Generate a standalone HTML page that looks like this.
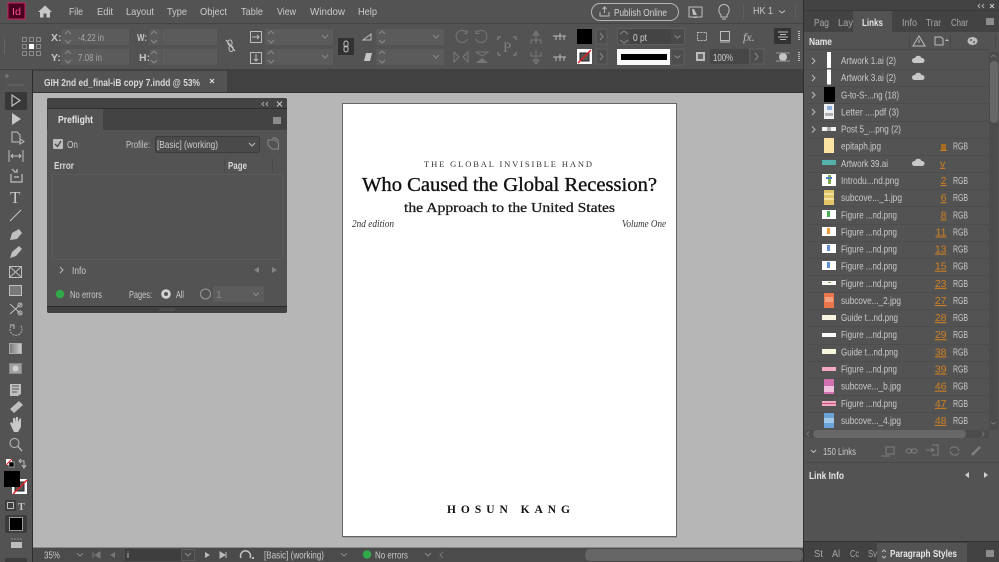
<!DOCTYPE html>
<html><head><meta charset="utf-8"><style>
html,body{margin:0;padding:0;background:#535353;width:999px;height:562px;overflow:hidden}
svg{display:block;position:absolute;left:0;top:0;filter:blur(.3px)}
text{font-family:"Liberation Sans",sans-serif;font-size:10.5px;fill:#cacaca;white-space:pre}
.b{font-weight:bold;fill:#e6e6e6}
.s{font-family:"Liberation Serif",serif;fill:#111}
.o{fill:#d0801f;text-decoration:underline}
.i{fill:none;stroke:#bdbdbd;stroke-width:1}
.d{fill:none;stroke:#8a8a8a;stroke-width:1}
.f{fill:#5b5b5b}
.g{fill:#bdbdbd}
</style></head><body>
<svg width="999" height="562" viewBox="0 0 999 562" xmlns="http://www.w3.org/2000/svg">
<rect width="999" height="562" fill="#535353"/>
<!-- menu bar -->
<rect x="0" y="23" width="803" height="1" fill="#444"/>
<rect x="8" y="3" width="17" height="16" fill="#49021f" stroke="#d11f65" stroke-width="1"/>
<text x="12" y="15" style="font-size:10px;fill:#ff4f8f" textLength="9" lengthAdjust="spacingAndGlyphs">Id</text>
<path d="M45 5.500L38 12H40V17.500H43.500V13.500H46.500V17.500H50V12H52Z" fill="#c8c8c8"/>
<text x="69" y="15" textLength="14" lengthAdjust="spacingAndGlyphs">File</text>
<text x="97" y="15" textLength="16" lengthAdjust="spacingAndGlyphs">Edit</text>
<text x="126" y="15" textLength="28" lengthAdjust="spacingAndGlyphs">Layout</text>
<text x="167" y="15" textLength="20" lengthAdjust="spacingAndGlyphs">Type</text>
<text x="200" y="15" textLength="27" lengthAdjust="spacingAndGlyphs">Object</text>
<text x="241" y="15" textLength="22" lengthAdjust="spacingAndGlyphs">Table</text>
<text x="277" y="15" textLength="19" lengthAdjust="spacingAndGlyphs">View</text>
<text x="310" y="15" textLength="35" lengthAdjust="spacingAndGlyphs">Window</text>
<text x="358" y="15" textLength="19" lengthAdjust="spacingAndGlyphs">Help</text>
<rect x="591.500" y="3.500" width="87" height="17" rx="8.500" fill="none" stroke="#b5b5b5"/>
<path d="M600 12V16H609V12M604.500 13V7M602.500 9L604.500 7L606.500 9" class="i"/>
<text x="614" y="16" style="fill:#d4d4d4" textLength="53" lengthAdjust="spacingAndGlyphs">Publish Online</text>
<rect x="689" y="7" width="13" height="10" class="i"/><path d="M692 9h2l3 6h-4z" fill="#bdbdbd"/><rect x="694" y="17" width="3" height="1" fill="#bdbdbd"/>
<path d="M721 15C717 11 719 4.500 724 4.500S731 11 727 15V17H721ZM722 19H726" class="i"/>
<rect x="743" y="4" width="1" height="15" fill="#5e5e5e"/>
<text x="753" y="14" style="fill:#c8c8c8" textLength="20" lengthAdjust="spacingAndGlyphs">HK 1</text>
<path d="M779 10.500L782 13L785 10.500" class="i"/>
<rect x="795" y="4" width="1" height="15" fill="#5e5e5e"/>
<!-- control bar -->
<rect x="0" y="69" width="803" height="1" fill="#404040"/>
<rect x="4" y="39" width="1" height="15" fill="#666"/>
<g class="d" fill="none"><rect x="22.500" y="37.500" width="4" height="4" class="d"/><rect x="29.500" y="37.500" width="4" height="4" class="d"/><rect x="36.500" y="37.500" width="4" height="4" class="d"/><rect x="22.500" y="44.500" width="4" height="4" class="d"/><rect x="36.500" y="44.500" width="4" height="4" class="d"/><rect x="22.500" y="51.500" width="4" height="4" class="d"/><rect x="29.500" y="51.500" width="4" height="4" class="d"/><rect x="36.500" y="51.500" width="4" height="4" class="d"/></g>
<rect x="29" y="44" width="5" height="5" fill="#fff"/>
<text x="51" y="41" class="b" style="fill:#c4c4c4" >X:</text>
<text x="51" y="61" class="b" style="fill:#c4c4c4">Y:</text>
<rect x="61" y="29" width="68" height="16" class="f"/><rect x="61" y="49" width="68" height="16" class="f"/>
<path d="M65 34L68 31L71 34M65 40L68 43L71 40M65 54L68 51L71 54M65 60L68 63L71 60" class="d"/>
<text x="78" y="41" style="fill:#a8a8a8" textLength="26" lengthAdjust="spacingAndGlyphs">-4.22 in</text>
<text x="78" y="61" style="fill:#a8a8a8" textLength="24" lengthAdjust="spacingAndGlyphs">7.08 in</text>
<text x="137" y="41" class="b" style="fill:#c4c4c4" textLength="10" lengthAdjust="spacingAndGlyphs">W:</text>
<text x="139" y="61" class="b" style="fill:#c4c4c4">H:</text>
<rect x="149" y="29" width="68" height="16" class="f"/><rect x="149" y="49" width="68" height="16" class="f"/>
<path d="M151 34L154 31L157 34M151 40L154 43L157 40M151 54L154 51L157 54M151 60L154 63L157 60" class="d"/>
<rect x="161" y="29" width="1" height="36" fill="#535353"/>
<path d="M226 40L235 51" stroke="#c4c4c4" fill="none" stroke-width="1.200"/>
<rect x="228" y="40" width="4" height="5.500" rx="2" transform="rotate(-8 230 43)" fill="none" stroke="#c4c4c4"/>
<rect x="229" y="46" width="4" height="5.500" rx="2" transform="rotate(-8 231 48)" fill="none" stroke="#c4c4c4"/>
<rect x="250.500" y="31.500" width="11" height="11" class="i"/><path d="M252 37H259M257 35L259 37L257 39" class="i"/>
<rect x="250.500" y="52.500" width="11" height="11" class="i"/><path d="M256 54V61M254 59L256 61L258 59" class="i"/>
<rect x="265" y="29" width="68" height="16" class="f"/><rect x="265" y="49" width="68" height="16" class="f"/>
<path d="M268 34L271 31L274 34M268 40L271 43L274 40M268 54L271 51L274 54M268 60L271 63L274 60M322 35L325 38L328 35M322 55L325 58L328 55" class="d"/>
<rect x="338" y="38" width="16" height="17" fill="#313131"/>
<rect x="344" y="41" width="4" height="6" rx="2" class="i"/><rect x="344" y="46" width="4" height="6" rx="2" class="i"/>
<path d="M363 40L371 34V40Z" class="i"/><path d="M364 61L366 53H372L370 61Z" fill="#c4c4c4"/>
<rect x="376" y="29" width="68" height="16" class="f"/><rect x="376" y="49" width="68" height="16" class="f"/>
<path d="M379 34L382 31L385 34M379 40L382 43L385 40M379 54L382 51L385 54M379 60L382 63L385 60M433 35L436 38L439 35M433 55L436 58L439 55" class="d"/>
<path d="M467 33A6 6 0 1 0 467.500 39M467 30V33.500H463.500M476 33A6 6 0 1 1 475.500 39M476 30V33.500H479.500" stroke="#777" fill="none"/>
<path d="M454 52V62L459 57ZM468 52V62L463 57Z" stroke="#7a7a7a" fill="none"/><path d="M476 63H488L482 58Z" fill="#777"/><path d="M476 52H488L482 56Z" fill="#535353" stroke="#777"/>
<path d="M498 40V37H501M513 37H516V40M498 52V55H501M513 55H516V52" stroke="#888" fill="none"/>
<text x="503" y="52" style="font-family:'Liberation Serif',serif;font-size:15px;fill:#808080">P</text>
<path d="M536 31V44M533 35L536 31L539 35ZM531 44V40H541V44" stroke="#7a7a7a" fill="none"/>
<path d="M553 36H566M556 36V40M560 33V40M564 36V40" stroke="#bbb" fill="none"/>
<path d="M536 50V64M533 60L536 64L539 60ZM531 52V56H541V52" stroke="#7a7a7a" fill="none"/>
<path d="M553 57H566M556 57V61M560 54V61M564 57V61" stroke="#bbb" fill="none"/>
<rect x="577" y="29" width="15" height="15" fill="#000"/>
<rect x="577" y="49" width="15" height="15" fill="#fff"/><rect x="580" y="53" width="9" height="8" fill="#555" stroke="#222"/><path d="M578 63L591 50" stroke="#e81c24" stroke-width="1.300"/>
<rect x="596" y="29" width="11" height="15" fill="#4d4d4d" stroke="#5f5f5f"/><rect x="596" y="49" width="11" height="15" fill="#4d4d4d" stroke="#5f5f5f"/>
<path d="M600 33L603 36.500L600 40M600 53L603 56.500L600 60" class="d"/>
<rect x="617.500" y="28.500" width="67" height="16" fill="#4a4a4a" stroke="#5e5e5e"/>
<path d="M620 34L624 31L628 34M620 40L624 43L628 40" class="d"/>
<rect x="630" y="29" width="41" height="15" fill="#444"/>
<text x="633" y="41" style="fill:#d0d0d0" textLength="14" lengthAdjust="spacingAndGlyphs">0 pt</text>
<path d="M674.500 35.500L677.500 38L680.500 35.500" class="d"/>
<rect x="617" y="49" width="53" height="16" fill="#fafafa"/><rect x="621" y="54" width="46" height="6" fill="#000"/>
<rect x="671" y="49" width="13" height="16" fill="#4d4d4d" stroke="#5f5f5f"/><path d="M674.500 55.500L677.500 58L680.500 55.500" class="d"/>
<rect x="697.500" y="32.500" width="9" height="8" fill="none" stroke="#bdbdbd" stroke-dasharray="2 1"/>
<rect x="720.500" y="31.500" width="9" height="9" class="i"/><rect x="720" y="41" width="10" height="2" fill="#888"/>
<text x="743" y="41" style="font-family:'Liberation Serif',serif;font-style:italic;font-size:12px;fill:#bdbdbd">fx.</text>
<rect x="696" y="52" width="9" height="9" fill="#bbb"/><rect x="698" y="54" width="5" height="5" fill="#666"/>
<rect x="710" y="49" width="39" height="15" fill="#474747"/>
<text x="713" y="61" style="fill:#d0d0d0" textLength="20" lengthAdjust="spacingAndGlyphs">100%</text>
<rect x="750" y="49" width="14" height="15" fill="#4d4d4d" stroke="#5f5f5f"/><path d="M755 53L758 56.500L755 60" class="d"/>
<rect x="774" y="28" width="17" height="16" fill="#333"/>
<path d="M778 32H788M780 34.500H786M778 37H788M780 39.500H786" stroke="#bbb"/>
<circle cx="783" cy="57" r="4" fill="#c4c4c4"/><path d="M776 53H790M776 61H790" stroke="#999"/>
<path d="M799 31V40M799 52V62" stroke="#bbb" stroke-width="2" stroke-dasharray="1 1"/>
<!-- tab bar -->
<rect x="33" y="70" width="770" height="23" fill="#414141"/>
<rect x="33" y="71" width="194" height="21" fill="#535353"/>
<text x="44" y="86" class="b" style="fill:#d8d8d8" textLength="156" lengthAdjust="spacingAndGlyphs">GIH 2nd ed_final-iB copy 7.indd @ 53%</text>
<path d="M210 79L214 83M214 79L210 83" stroke="#ddd" stroke-width="1.200"/>
<!-- canvas -->
<rect x="33" y="93" width="770" height="455" fill="#b6b6b6"/>
<rect x="33" y="92" width="770" height="1" fill="#333"/>
<rect x="32" y="70" width="1" height="492" fill="#2c2c2c"/>
<rect x="803" y="0" width="1" height="562" fill="#2f2f2f"/>
<!-- page -->
<rect x="342.500" y="103.500" width="334" height="433" fill="#fff" stroke="#666"/>
<rect x="343" y="537" width="334" height="1" fill="#999"/>
<text x="424" y="167" class="s" style="font-size:8.500px;fill:#333" textLength="168">THE GLOBAL INVISIBLE HAND</text>
<text x="362" y="191" class="s" style="font-size:20px;fill:#111;stroke:#111;stroke-width:.35px" textLength="295" lengthAdjust="spacingAndGlyphs">Who Caused the Global Recession?</text>
<text x="404" y="212" class="s" style="font-size:14px;fill:#1a1a1a;stroke:#1a1a1a;stroke-width:.3px" textLength="211" lengthAdjust="spacingAndGlyphs">the Approach to the United States</text>
<text x="352" y="227" class="s" style="font-size:10px;font-style:italic;fill:#333" textLength="42" lengthAdjust="spacingAndGlyphs">2nd edition</text>
<text x="622" y="227" class="s" style="font-size:10px;font-style:italic;fill:#333" textLength="44" lengthAdjust="spacingAndGlyphs">Volume One</text>
<text x="447" y="513" class="s" style="font-size:11.500px;font-weight:bold" textLength="123">HOSUN KANG</text>
<!-- preflight -->
<rect x="47" y="98" width="240" height="215" rx="2" fill="#535353"/>
<path d="M47 100a2 2 0 0 1 2-2h236a2 2 0 0 1 2 2v30H47Z" fill="#434343"/>
<rect x="47" y="108" width="240" height="1" fill="#2f2f2f"/>
<rect x="48" y="109" width="55" height="21" fill="#535353"/>
<path d="M264 102L262 104L264 106M268 102L266 104L268 106" stroke="#aaa" fill="none"/>
<path d="M277 101.500L282 106.500M282 101.500L277 106.500" stroke="#ccc"/>
<rect x="273" y="117" width="8" height="7" fill="#8c8c8c"/>
<text x="58" y="123" class="b" textLength="35" lengthAdjust="spacingAndGlyphs">Preflight</text>
<rect x="53" y="139" width="10" height="10" rx="1" fill="#bdbdbd"/><path d="M55 144L57.500 146.500L61 141" stroke="#444" stroke-width="1.300" fill="none"/>
<text x="67" y="148" textLength="11" lengthAdjust="spacingAndGlyphs">On</text>
<text x="126" y="148" textLength="24" lengthAdjust="spacingAndGlyphs">Profile:</text>
<rect x="155.500" y="136.500" width="104" height="16" rx="2" fill="#4a4a4a" stroke="#3c3c3c"/>
<text x="157" y="148" style="fill:#cfcfcf" textLength="61" lengthAdjust="spacingAndGlyphs">[Basic] (working)</text>
<path d="M249 143L252 146L255 143" class="i"/>
<path d="M268 140H275L278.500 143V149H272L268 145Z" stroke="#888" fill="none"/><path d="M272 138H276L279 141" stroke="#888" fill="none"/>
<text x="54" y="169" class="b" style="fill:#d8d8d8" textLength="20" lengthAdjust="spacingAndGlyphs">Error</text>
<text x="228" y="169" class="b" style="fill:#d8d8d8" textLength="19" lengthAdjust="spacingAndGlyphs">Page</text>
<rect x="224" y="158" width="1" height="15" fill="#4a4a4a"/><rect x="272" y="158" width="1" height="15" fill="#4a4a4a"/>
<rect x="52.500" y="174.500" width="230" height="85" rx="1" fill="#535353" stroke="#5a5a5a"/>
<path d="M60 267L63 270L60 273" class="i"/>
<text x="72" y="274" textLength="14" lengthAdjust="spacingAndGlyphs">Info</text>
<path d="M259 267V273L254 270Z" fill="#858585"/><path d="M272 267V273L277 270Z" fill="#858585"/>
<circle cx="60" cy="294" r="4.300" fill="#32a94a"/>
<text x="70" y="298" textLength="32" lengthAdjust="spacingAndGlyphs">No errors</text>
<text x="129" y="298" textLength="23" lengthAdjust="spacingAndGlyphs">Pages:</text>
<circle cx="166" cy="294" r="4.800" fill="#d2d2d2"/><circle cx="166" cy="294" r="2" fill="#555"/>
<text x="176" y="298" textLength="8" lengthAdjust="spacingAndGlyphs">All</text>
<circle cx="205.500" cy="294" r="5" fill="none" stroke="#999"/>
<rect x="213" y="286" width="51" height="16" rx="1" fill="#5c5c5c"/>
<text x="216" y="298" style="fill:#888">1</text>
<path d="M253 292.500L256 295.500L259 292.500" class="d"/>
<rect x="47" y="306" width="240" height="1" fill="#2a2a2a"/>
<path d="M47 307H287V311a2 2 0 0 1-2 2H49a2 2 0 0 1-2-2Z" fill="#414141"/>
<rect x="159" y="308" width="16" height="3" fill="#4c4c4c"/>
<!-- tools -->
<text x="5" y="78" style="font-size:7px;fill:#aaa">»</text>
<rect x="7" y="84" width="17" height="2" fill="#5f5f5f"/>
<rect x="5" y="92" width="22" height="18" rx="1" fill="#383838"/>
<path d="M12 95V106L20 100.500Z" fill="none" stroke="#c8c8c8" stroke-width="1.100"/>
<path d="M12 113V125L21 119Z" fill="#c8c8c8"/>
<path d="M12 132H17L20 135V142H12ZM20 139L24 141.500L20 144Z" stroke="#c0c0c0" fill="none"/>
<path d="M9 150V162M23 150V162M11 156H21M13 154L11 156L13 158M19 154L21 156L19 158" stroke="#c0c0c0" fill="none"/>
<path d="M11 174V182H22V174M12 169L15 172M14 172H17V169M14 177H19" stroke="#c0c0c0" fill="none" stroke-width="1.200"/>
<text x="10" y="203" style="font-family:'Liberation Serif',serif;font-size:17px;fill:#c8c8c8">T</text>
<path d="M10 221L21 210" stroke="#c4c4c4"/>
<path d="M10 240L12 233L19 229L22 233L17 239Z" fill="#c0c0c0"/>
<path d="M10 258L12 252L19 246L22 249L16 256Z" fill="#c0c0c0"/>
<rect x="9.500" y="266.500" width="12" height="11" class="i"/><path d="M10 267L21 277M21 267L10 277" class="i"/>
<rect x="9.500" y="285.500" width="12" height="10" fill="#787878" stroke="#c0c0c0"/>
<path d="M10 304L21 314M10 314L21 304" class="i"/><circle cx="20" cy="305" r="2" class="i"/><circle cx="20" cy="313" r="2" class="i"/>
<path d="M11 326A6 6 0 1 0 21 326" stroke="#b0b0b0" stroke-dasharray="2 1" fill="none"/><path d="M10 325H14V329" class="i"/>
<defs><linearGradient id="gr" x1="0" x2="1" y1="0" y2="0"><stop offset="0" stop-color="#777"/><stop offset="1" stop-color="#d0d0d0"/></linearGradient></defs>
<rect x="9.500" y="343.500" width="12" height="10" fill="url(#gr)" stroke="#aaa"/>
<rect x="9.500" y="363.500" width="12" height="10" fill="#a0a0a0" stroke="#888"/><circle cx="15.500" cy="368.500" r="3" fill="#d0d0d0"/>
<path d="M10 384H21V394L18 396H10Z" fill="#bfbfbf"/><path d="M12 386H19M12 389H19M12 392H17" stroke="#555"/>
<path d="M10 409L19 401L23 405L14 413Z" fill="#c0c0c0"/>
<path d="M12 428L10 423L12 422L13 424V418L15 418V422L16 417H18V422L20 418L21 419V427L18 432H14Z" fill="#c8c8c8"/>
<circle cx="14.500" cy="443" r="4.500" class="i"/><path d="M18 446.500L22 451" stroke="#c0c0c0" stroke-width="1.300"/>
<rect x="6" y="459" width="6" height="6" fill="#fff"/><rect x="9" y="462" width="5" height="5" fill="#000" stroke="#ccc" stroke-width=".6"/><path d="M6 465L12 459" stroke="#e81c24"/>
<path d="M19 461H24V467M22 465L24 468L26 465M21 459L19 461L21 463" stroke="#bbb" fill="none"/>
<rect x="12" y="479" width="15" height="15" fill="#fff"/><rect x="15" y="482" width="9" height="9" fill="#555" stroke="#222"/><path d="M13 494L27 480" stroke="#e81c24" stroke-width="1.300"/>
<rect x="4" y="471" width="16" height="16" fill="#000"/>
<rect x="5" y="500" width="11" height="11" rx="1" fill="#3d3d3d"/><rect x="7.500" y="502.500" width="6" height="6" class="i"/>
<text x="18" y="510" style="font-family:'Liberation Serif',serif;font-size:10px;font-weight:bold;fill:#c8c8c8">T</text>
<rect x="5" y="515" width="22" height="18" rx="1" fill="#3c3c3c"/><rect x="9.500" y="517.500" width="13" height="13" fill="#000" stroke="#999"/>
<rect x="11" y="542" width="11" height="6" fill="#bdbdbd"/><path d="M11 539H22" stroke="#888" stroke-dasharray="2 1"/>
<rect x="5" y="558" width="22" height="4" fill="#3d3d3d"/>
<!-- status bar -->
<rect x="33" y="548" width="770" height="14" fill="#4b4b4b"/>
<rect x="33" y="547" width="770" height="1" fill="#888"/>
<text x="44" y="558.500" textLength="16" lengthAdjust="spacingAndGlyphs">35%</text>
<path d="M77 553L80 556L83 553M341 553L344 556L347 553M425 553L428 556L431 553" class="d"/>
<path d="M93 552V558M100 552V558L95 555Z" stroke="#777" fill="#777"/><path d="M115 552V558L110 555Z" fill="#777"/>
<rect x="125" y="549" width="56" height="12" fill="#3e3e3e"/>
<text x="127" y="558" style="font-size:9px">i</text>
<rect x="181.500" y="549.500" width="13" height="11" fill="#474747" stroke="#5b5b5b"/><path d="M185 553L188 556L191 553" class="d"/>
<path d="M205 552V558L210 555Z" fill="#bbb"/><path d="M220 552V558L225 555Z M226 552V558" fill="#bbb" stroke="#bbb"/>
<path d="M241 558A5 5 0 1 1 250 558" stroke="#c4c4c4" fill="none" stroke-width="1.500"/><rect x="252" y="557" width="2" height="2" fill="#bbb"/>
<text x="264" y="558.500" textLength="60" lengthAdjust="spacingAndGlyphs">[Basic] (working)</text>
<circle cx="367" cy="554.500" r="4.200" fill="#32a94a"/>
<text x="375" y="558.500" textLength="33" lengthAdjust="spacingAndGlyphs">No errors</text>
<path d="M443 552L440 555L443 558" stroke="#777" fill="none"/>
<rect x="585" y="549" width="218" height="12" rx="5" fill="#666"/>
<!-- right panel -->
<rect x="804" y="0" width="195" height="562" fill="#535353"/>
<rect x="804" y="0" width="195" height="32" fill="#434343"/>
<path d="M980 4L978 6L980 8M984 4L982 6L984 8" stroke="#aaa" fill="none"/>
<path d="M990 4L994 8M994 4L990 8" stroke="#ccc"/>
<rect x="804" y="10" width="195" height="1" fill="#3a3a3a"/>
<rect x="853" y="11" width="39" height="21" fill="#535353"/>
<text x="814" y="26" style="fill:#a8a8a8" textLength="15" lengthAdjust="spacingAndGlyphs">Pag</text>
<text x="838" y="26" style="fill:#a8a8a8" textLength="15" lengthAdjust="spacingAndGlyphs">Lay</text>
<text x="862" y="26" class="b" textLength="21" lengthAdjust="spacingAndGlyphs">Links</text>
<text x="902" y="26" style="fill:#a8a8a8" textLength="15" lengthAdjust="spacingAndGlyphs">Info</text>
<text x="926" y="26" style="fill:#a8a8a8" textLength="15" lengthAdjust="spacingAndGlyphs">Trar</text>
<text x="951" y="26" style="fill:#a8a8a8" textLength="17" lengthAdjust="spacingAndGlyphs">Char</text>
<rect x="986" y="18" width="8" height="7" fill="#8c8c8c"/>
<text x="809" y="45" class="b" textLength="23" lengthAdjust="spacingAndGlyphs">Name</text>
<rect x="909" y="34" width="1" height="14" fill="#484848"/><rect x="950" y="34" width="1" height="14" fill="#484848"/><rect x="995" y="34" width="1" height="14" fill="#484848"/>
<path d="M919 36L913 46H925ZM919 39.500V43" stroke="#bdbdbd" fill="none"/>
<path d="M935 37H941L943 39V45H935Z" class="i"/><path d="M945 41L947 39L949 41Z" fill="#bbb"/>
<ellipse cx="972.500" cy="41" rx="5" ry="4" fill="#bdbdbd"/><circle cx="971" cy="40" r="1" fill="#555"/><circle cx="974" cy="42" r="1" fill="#555"/>
<rect x="804" y="49" width="185" height="1" fill="#4a4a4a"/>
<g fill="#4d4d4d">
<rect x="806" y="69" width="183" height="1"/><rect x="806" y="86" width="183" height="1"/><rect x="806" y="103" width="183" height="1"/><rect x="806" y="121" width="183" height="1"/><rect x="806" y="138" width="183" height="1"/><rect x="806" y="155" width="183" height="1"/><rect x="806" y="172" width="183" height="1"/><rect x="806" y="189" width="183" height="1"/><rect x="806" y="206" width="183" height="1"/><rect x="806" y="224" width="183" height="1"/><rect x="806" y="241" width="183" height="1"/><rect x="806" y="258" width="183" height="1"/><rect x="806" y="275" width="183" height="1"/><rect x="806" y="292" width="183" height="1"/><rect x="806" y="309" width="183" height="1"/><rect x="806" y="326" width="183" height="1"/><rect x="806" y="344" width="183" height="1"/><rect x="806" y="361" width="183" height="1"/><rect x="806" y="378" width="183" height="1"/><rect x="806" y="395" width="183" height="1"/><rect x="806" y="412" width="183" height="1"/>
</g>
<path d="M812 58L815 61L812 64M812 75L815 78L812 81M812 92L815 95L812 98M812 109L815 112L812 115M812 126.500L815 129.500L812 132.500" class="i"/>
<!-- thumbs -->
<rect x="827" y="52" width="4" height="16" fill="#fff"/>
<rect x="827" y="69.500" width="4" height="15" fill="#fff"/>
<rect x="824" y="87" width="11" height="15" fill="#000"/>
<rect x="824" y="104" width="10" height="15" fill="#eef0f4"/><rect x="827" y="106" width="5" height="4" fill="#8fb0d8"/><rect x="825" y="113" width="8" height="3" fill="#b0b0b0"/>
<rect x="822" y="127" width="14" height="4" fill="#f2f2f2"/><rect x="827" y="127" width="4" height="4" fill="#aaa"/>
<rect x="824" y="138" width="10" height="15" fill="#fde3a1"/>
<rect x="822" y="160" width="14" height="5" fill="#55b2ab"/>
<rect x="822" y="174" width="14" height="12" fill="#fff"/><rect x="828" y="175" width="3" height="9" fill="#7ea94a"/><rect x="826" y="177" width="6" height="2" fill="#4d7fc0"/>
<rect x="824" y="190" width="10" height="15" fill="#e2c469"/><rect x="824" y="193" width="10" height="2" fill="#f3e2a0"/><rect x="824" y="198" width="10" height="2" fill="#f3e2a0"/>
<rect x="822" y="210" width="14" height="9" fill="#fff"/><rect x="827" y="211" width="3" height="6" fill="#45b04d"/>
<rect x="822" y="227" width="14" height="9" fill="#fff"/><rect x="827" y="228" width="3" height="6" fill="#ee9a3a"/>
<rect x="822" y="244" width="14" height="9" fill="#fff"/><rect x="827" y="245" width="3" height="6" fill="#5f8fd0"/>
<rect x="822" y="261" width="14" height="9" fill="#fff"/><rect x="827" y="262" width="3" height="6" fill="#5f8fd0"/>
<rect x="822" y="281" width="14" height="4" fill="#fafafa"/><rect x="828" y="282" width="3" height="1" fill="#7ea94a"/>
<rect x="824" y="293" width="10" height="15" fill="#e8764a"/><rect x="825" y="297" width="8" height="5" fill="#f0a080"/>
<rect x="822" y="315" width="14" height="5" fill="#f8f4e0"/>
<rect x="822" y="333" width="14" height="4" fill="#fafafa"/>
<rect x="822" y="349" width="14" height="5" fill="#f8f6dc"/>
<rect x="822" y="367" width="14" height="4" fill="#f5a8c4"/>
<rect x="824" y="379" width="10" height="15" fill="#d070b0"/><rect x="824" y="386" width="10" height="6" fill="#f0c0dc"/>
<rect x="822" y="401" width="14" height="5" fill="#f0a8c0"/><rect x="822" y="403" width="14" height="1" fill="#c05080"/>
<rect x="824" y="413" width="10" height="15" fill="#6ba3d6"/><rect x="824" y="418" width="10" height="5" fill="#a0c8e8"/>
<!-- names -->
<text x="841" y="64" textLength="55" lengthAdjust="spacingAndGlyphs">Artwork 1.ai (2)</text>
<text x="841" y="81" textLength="55" lengthAdjust="spacingAndGlyphs">Artwork 3.ai (2)</text>
<text x="841" y="98.300" textLength="58" lengthAdjust="spacingAndGlyphs">G-to-S-...ng (18)</text>
<text x="841" y="115.400" textLength="58" lengthAdjust="spacingAndGlyphs">Letter ....pdf (3)</text>
<text x="841" y="132.600" textLength="60" lengthAdjust="spacingAndGlyphs">Post 5_...png (2)</text>
<text x="841" y="149.700" textLength="40" lengthAdjust="spacingAndGlyphs">epitaph.jpg</text>
<text x="841" y="166.800" textLength="47" lengthAdjust="spacingAndGlyphs">Artwork 39.ai</text>
<text x="841" y="184" textLength="58" lengthAdjust="spacingAndGlyphs">Introdu...nd.png</text>
<text x="841" y="201.100" textLength="61" lengthAdjust="spacingAndGlyphs">subcove..._1.jpg</text>
<text x="841" y="218.300" textLength="56" lengthAdjust="spacingAndGlyphs">Figure ...nd.png</text>
<text x="841" y="235.400" textLength="56" lengthAdjust="spacingAndGlyphs">Figure ...nd.png</text>
<text x="841" y="252.500" textLength="56" lengthAdjust="spacingAndGlyphs">Figure ...nd.png</text>
<text x="841" y="269.700" textLength="56" lengthAdjust="spacingAndGlyphs">Figure ...nd.png</text>
<text x="841" y="286.800" textLength="56" lengthAdjust="spacingAndGlyphs">Figure ...nd.png</text>
<text x="841" y="304" textLength="60" lengthAdjust="spacingAndGlyphs">subcove..._2.jpg</text>
<text x="841" y="321.100" textLength="57" lengthAdjust="spacingAndGlyphs">Guide t...nd.png</text>
<text x="841" y="338.200" textLength="56" lengthAdjust="spacingAndGlyphs">Figure ...nd.png</text>
<text x="841" y="355.400" textLength="57" lengthAdjust="spacingAndGlyphs">Guide t...nd.png</text>
<text x="841" y="372.500" textLength="56" lengthAdjust="spacingAndGlyphs">Figure ...nd.png</text>
<text x="841" y="389.700" textLength="60" lengthAdjust="spacingAndGlyphs">subcove..._b.jpg</text>
<text x="841" y="406.800" textLength="56" lengthAdjust="spacingAndGlyphs">Figure ...nd.png</text>
<text x="841" y="423.900" textLength="60" lengthAdjust="spacingAndGlyphs">subcove..._4.jpg</text>
<!-- clouds -->
<g fill="#c8c8c8"><path d="M914 63a2.500 2.500 0 0 1 1-5 3.500 3.500 0 0 1 6.500 0 2.500 2.500 0 0 1 1 5Z"/><path d="M914 80a2.500 2.500 0 0 1 1-5 3.500 3.500 0 0 1 6.500 0 2.500 2.500 0 0 1 1 5Z"/><path d="M914 166a2.500 2.500 0 0 1 1-5 3.500 3.500 0 0 1 6.500 0 2.500 2.500 0 0 1 1 5Z"/></g>
<!-- pages -->
<rect x="941" y="144" width="5" height="6" fill="#a86c20"/><rect x="940" y="150" width="7" height="1" fill="#c97d22"/>
<text x="940" y="166.800" class="o">v</text>
<g text-anchor="end">
<text x="946.500" y="184" class="o">2</text>
<text x="946.500" y="201.100" class="o">6</text>
<text x="946.500" y="218.300" class="o">8</text>
<text x="946.500" y="235.400" class="o">11</text>
<text x="946.500" y="252.500" class="o">13</text>
<text x="946.500" y="269.700" class="o">15</text>
<text x="946.500" y="286.800" class="o">23</text>
<text x="946.500" y="304" class="o">27</text>
<text x="946.500" y="321.100" class="o">28</text>
<text x="946.500" y="338.200" class="o">29</text>
<text x="946.500" y="355.400" class="o">38</text>
<text x="946.500" y="372.500" class="o">39</text>
<text x="946.500" y="389.700" class="o">46</text>
<text x="946.500" y="406.800" class="o">47</text>
<text x="946.500" y="423.900" class="o">48</text>
</g>
<g>
<text x="953" y="149.700" textLength="15" lengthAdjust="spacingAndGlyphs">RGB</text><text x="953" y="184" textLength="15" lengthAdjust="spacingAndGlyphs">RGB</text><text x="953" y="201.100" textLength="15" lengthAdjust="spacingAndGlyphs">RGB</text><text x="953" y="218.300" textLength="15" lengthAdjust="spacingAndGlyphs">RGB</text><text x="953" y="235.400" textLength="15" lengthAdjust="spacingAndGlyphs">RGB</text><text x="953" y="252.500" textLength="15" lengthAdjust="spacingAndGlyphs">RGB</text><text x="953" y="269.700" textLength="15" lengthAdjust="spacingAndGlyphs">RGB</text><text x="953" y="286.800" textLength="15" lengthAdjust="spacingAndGlyphs">RGB</text><text x="953" y="304" textLength="15" lengthAdjust="spacingAndGlyphs">RGB</text><text x="953" y="321.100" textLength="15" lengthAdjust="spacingAndGlyphs">RGB</text><text x="953" y="338.200" textLength="15" lengthAdjust="spacingAndGlyphs">RGB</text><text x="953" y="355.400" textLength="15" lengthAdjust="spacingAndGlyphs">RGB</text><text x="953" y="372.500" textLength="15" lengthAdjust="spacingAndGlyphs">RGB</text><text x="953" y="389.700" textLength="15" lengthAdjust="spacingAndGlyphs">RGB</text><text x="953" y="406.800" textLength="15" lengthAdjust="spacingAndGlyphs">RGB</text><text x="953" y="423.900" textLength="15" lengthAdjust="spacingAndGlyphs">RGB</text>
</g>
<!-- scrollbars -->
<rect x="989" y="52" width="9" height="378" fill="#4c4c4c"/>
<rect x="990" y="61" width="8" height="62" rx="4" fill="#676767"/>
<path d="M991 57L993.500 55L996 57M991 422L993.500 424L996 422" stroke="#777" fill="none"/>
<rect x="805" y="430" width="184" height="8" fill="#4c4c4c"/>
<rect x="813" y="430" width="153" height="8" rx="4" fill="#676767"/>
<path d="M809 431.500L807 434L809 436.500M982 431.500L984 434L982 436.500" stroke="#777" fill="none"/>
<path d="M811 450L813.500 452.500L816 450" class="i"/>
<text x="823" y="455" textLength="33" lengthAdjust="spacingAndGlyphs">150 Links</text>
<g stroke="#7f7f7f" fill="none"><rect x="886" y="447" width="8" height="7"/><path d="M881 456H890"/><rect x="906" y="449" width="6" height="4" rx="2"/><rect x="911" y="449" width="6" height="4" rx="2"/><path d="M926 450H933M931 448L934 450L931 452M932 445H938V455H932"/><path d="M950 449A5 5 0 0 1 959 451M959 453A5 5 0 0 1 950 451"/><path d="M972 455L980 447" stroke-width="2.500"/></g>
<rect x="804" y="462" width="195" height="1" fill="#494949"/>
<text x="809" y="479" class="b" textLength="35" lengthAdjust="spacingAndGlyphs">Link Info</text>
<path d="M969 472V478L965 475Z" fill="#d0d0d0"/><path d="M984 472V478L988 475Z" fill="#d0d0d0"/>
<rect x="804" y="541" width="195" height="21" fill="#424242"/>
<rect x="804" y="541" width="195" height="1" fill="#2f2f2f"/>
<rect x="877" y="543" width="90" height="19" fill="#535353"/>
<text x="814" y="557" style="fill:#a8a8a8" textLength="9" lengthAdjust="spacingAndGlyphs">St</text>
<text x="832" y="557" style="fill:#a8a8a8" textLength="8" lengthAdjust="spacingAndGlyphs">Al</text>
<text x="850" y="557" style="fill:#a8a8a8" textLength="9" lengthAdjust="spacingAndGlyphs">Cc</text>
<text x="868" y="557" style="fill:#a8a8a8" textLength="9" lengthAdjust="spacingAndGlyphs">Sv</text>
<path d="M882 552L884 550L886 552M882 556L884 558L886 556" stroke="#bbb" fill="none"/>
<text x="890" y="557" class="b" textLength="67" lengthAdjust="spacingAndGlyphs">Paragraph Styles</text>
<rect x="986" y="550" width="8" height="7" fill="#8c8c8c"/>
</svg>
</body></html>
